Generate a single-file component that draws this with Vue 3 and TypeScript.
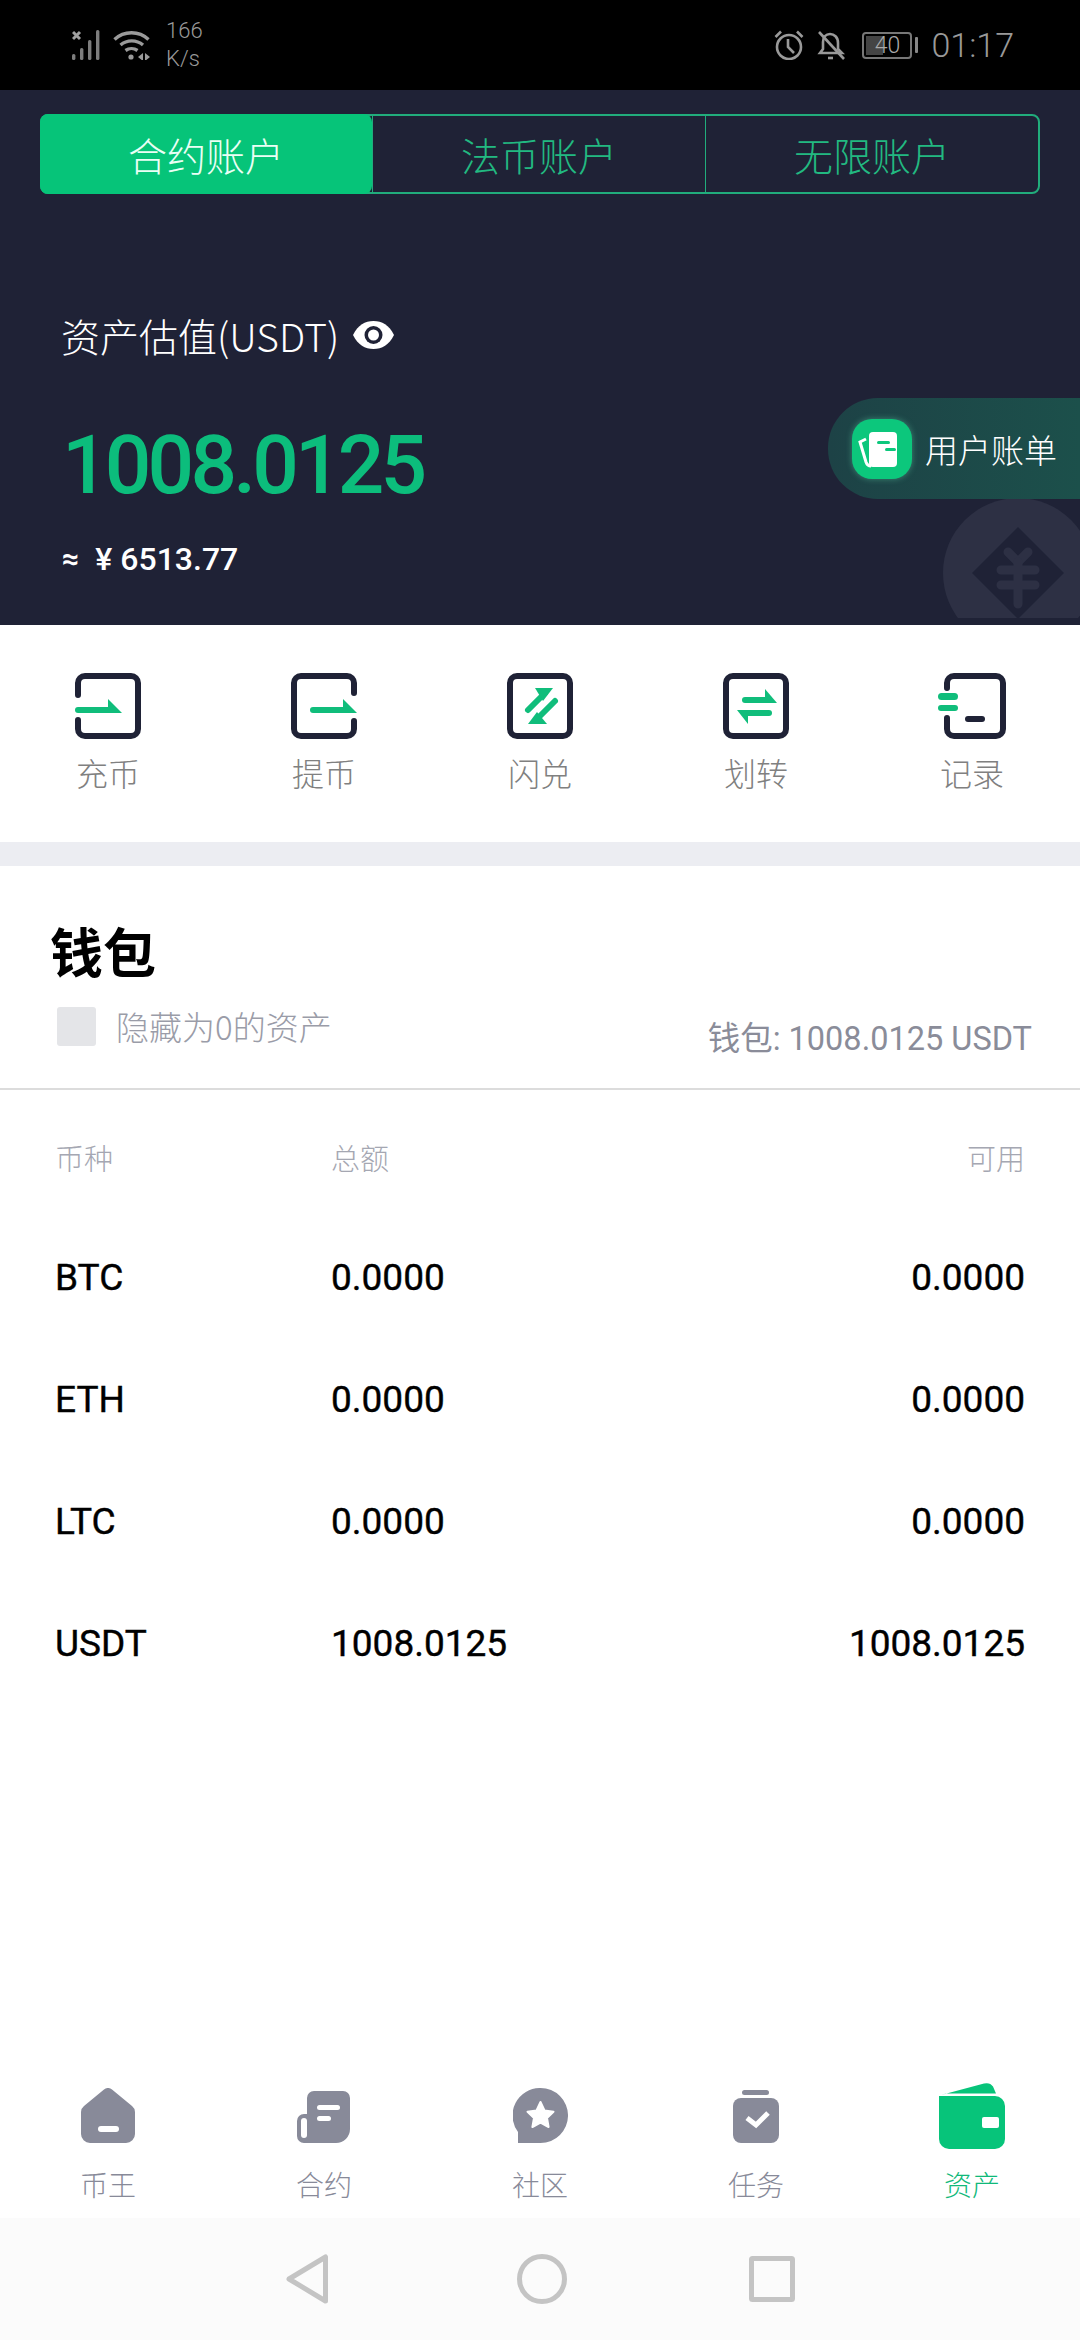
<script setup lang="ts">
const accounts = ['合约账户', '法币账户', '无限账户'];
const actions = ['充币', '提币', '闪兑', '划转', '记录'];
const coins = [
  { name: 'BTC', total: '0.0000', free: '0.0000' },
  { name: 'ETH', total: '0.0000', free: '0.0000' },
  { name: 'LTC', total: '0.0000', free: '0.0000' },
  { name: 'USDT', total: '1008.0125', free: '1008.0125' },
];
const tabs = ['币王', '合约', '社区', '任务', '资产'];
</script>

<template>
  <div class="page">
    <div class="status">
      <div class="status-left">
        <svg width="32" height="30" viewBox="0 0 32 30">
          <path d="M1 2l7 7M8 2l-7 7" stroke="#a0a0a0" stroke-width="3" />
          <g fill="#7d7d7d">
            <rect x="0" y="24" width="3.4" height="6" rx="1.5" />
            <rect x="8" y="18" width="3.4" height="12" rx="1.5" />
            <rect x="16" y="10" width="3.4" height="20" rx="1.5" />
            <rect x="24" y="0" width="3.4" height="30" rx="1.5" />
          </g>
        </svg>
        <svg width="38" height="30" viewBox="0 0 38 30" fill="none" stroke="#9a9a9a" stroke-width="3.4">
          <path d="M1.5 9.5C11 0.5 26 0.5 35.5 9.5" />
          <path d="M7.5 15C14 9.5 23.5 9.5 30 15" />
          <path d="M12.5 20.5C16 18 21 18 24.5 20.5" />
          <circle cx="18" cy="27" r="2.6" fill="#9a9a9a" stroke="none" />
          <path d="M30 23l-5 4 5 4zM32 23l5 4-5 4z" fill="#9a9a9a" stroke="none" />
        </svg>
        <div class="speed">
          <span>166</span>
          <span>K/s</span>
        </div>
      </div>
      <div class="status-right">
        <svg width="30" height="30" viewBox="0 0 30 30" fill="none" stroke="#999" stroke-width="2.6">
          <circle cx="15" cy="17" r="12" />
          <path d="M14 9v8l6 6" />
          <path d="M1.5 7L7 1.5M23 1.5L28.5 7" />
        </svg>
        <svg class="bell" width="28" height="30" viewBox="0 0 28 30" fill="none" stroke="#999" stroke-width="2.6">
          <path d="M3 23l3-4V12c0-5 3-8 7-8s8 3 8 9v6l4 4z" />
          <path d="M11 28h5" />
          <path d="M2 2l25 27" />
        </svg>
        <div class="battery">
          <div class="battery-level"></div>
          <span class="battery-text">40</span>
        </div>
        <div class="battery-nub"></div>
        <span class="clock">01:17</span>
      </div>
    </div>

    <div class="head">
      <div class="account-tabs">
        <div v-for="(a, i) in accounts" :key="a" class="account-tab" :class="{ active: i === 0 }">{{ a }}</div>
      </div>

      <div class="estimate">
        <span>资产估值(USDT)</span>
        <svg width="41" height="28" viewBox="0 0 41 28">
          <path d="M0 14C5 4 12 0 20.5 0S36 4 41 14C36 24 29 28 20.5 28S5 24 0 14z" fill="#fff" />
          <circle cx="20.5" cy="14" r="9" fill="#1f2236" />
          <circle cx="20.5" cy="14" r="5.5" fill="#fff" />
        </svg>
      </div>
      <div class="balance">1008.0125</div>
      <div class="cny"><span class="approx">≈</span><span>¥ 6513.77</span></div>

      <div class="bill-pill">
        <div class="bill-icon">
          <svg width="60" height="60" viewBox="0 0 60 60">
            <path d="M14 20l-6 3 6 20c1 3 3 4 5 4" fill="none" stroke="#fff" stroke-width="3" />
            <rect x="17" y="13" width="28" height="35" rx="4" fill="#fff" />
            <rect x="25" y="22" width="13" height="3" rx="1.5" fill="#0cc77c" />
            <rect x="33" y="29" width="11" height="3" rx="1.5" fill="#0cc77c" />
          </svg>
        </div>
        <span>用户账单</span>
      </div>

      <div class="mark">
        <svg width="150" height="150" viewBox="0 0 150 150">
          <circle cx="75" cy="75" r="75" fill="#2d3044" />
          <path d="M75 29l46 46-46 46-46-46z" fill="#1f2236" />
          <g stroke="#2d3044" stroke-width="9" stroke-linecap="round" fill="none">
            <path d="M65 54l10 10 10-10" />
            <path d="M58 72h34M58 87h34M75 64v42" />
          </g>
        </svg>
      </div>
    </div>

    <div class="actions">
      <div v-for="(a, i) in actions" :key="a" class="action">
        <svg v-if="i === 0" width="66" height="66" viewBox="0 0 66 66" fill="none">
          <path d="M3 22V10a7 7 0 0 1 7-7h46a7 7 0 0 1 7 7v46a7 7 0 0 1-7 7H10a7 7 0 0 1-7-7v-9" stroke="#1f2236" stroke-width="6" stroke-linecap="round" />
          <rect x="0" y="34" width="36" height="6" rx="3" fill="#10bd7b" />
          <path d="M33 26l14 14H33z" fill="#10bd7b" />
        </svg>
        <svg v-else-if="i === 1" width="66" height="66" viewBox="0 0 66 66" fill="none">
          <path d="M63 20V10a7 7 0 0 0-7-7H10a7 7 0 0 0-7 7v46a7 7 0 0 0 7 7h46a7 7 0 0 0 7-7v-8" stroke="#1f2236" stroke-width="6" stroke-linecap="round" />
          <rect x="19" y="34" width="36" height="6" rx="3" fill="#10bd7b" />
          <path d="M52 26l14 14H52z" fill="#10bd7b" />
        </svg>
        <svg v-else-if="i === 2" width="66" height="66" viewBox="0 0 66 66" fill="none">
          <rect x="3" y="3" width="60" height="60" rx="7" stroke="#1f2236" stroke-width="6" />
          <path d="M21 37l17-17" stroke="#10bd7b" stroke-width="6" stroke-linecap="round" />
          <path d="M28 15h18L36 28z" fill="#10bd7b" />
          <path d="M48 28L32 44" stroke="#10bd7b" stroke-width="6" stroke-linecap="round" />
          <path d="M21 51h19L30 39z" fill="#10bd7b" />
        </svg>
        <svg v-else-if="i === 3" width="66" height="66" viewBox="0 0 66 66" fill="none">
          <rect x="3" y="3" width="60" height="60" rx="7" stroke="#1f2236" stroke-width="6" />
          <rect x="19" y="24" width="28" height="6" rx="3" fill="#10bd7b" />
          <path d="M42 16l12 14H42z" fill="#10bd7b" />
          <rect x="20" y="37" width="29" height="6" rx="3" fill="#10bd7b" />
          <path d="M14 37h11v14z" fill="#10bd7b" />
        </svg>
        <svg v-else width="68" height="66" viewBox="0 0 68 66" fill="none">
          <path d="M9 15V10a7 7 0 0 1 7-7h42a7 7 0 0 1 7 7v46a7 7 0 0 1-7 7H16a7 7 0 0 1-7-7V45" stroke="#1f2236" stroke-width="6" stroke-linecap="round" />
          <rect x="0" y="20" width="20" height="7" rx="3.5" fill="#10bd7b" />
          <rect x="0" y="32" width="20" height="6" rx="3" fill="#10bd7b" />
          <rect x="27" y="43" width="20" height="6" rx="3" fill="#1f2236" />
        </svg>
        <span>{{ a }}</span>
      </div>
    </div>

    <div class="gap"></div>

    <div class="wallet">
      <h2>钱包</h2>
      <div class="wallet-meta">
        <label class="hide-zero">
          <span class="box"></span>
          <span class="hide-text">隐藏为0的资产</span>
        </label>
        <span class="wallet-total">钱包: 1008.0125 USDT</span>
      </div>
    </div>

    <div class="table">
      <div class="row row-head">
        <span class="c-name">币种</span>
        <span class="c-total">总额</span>
        <span class="c-free">可用</span>
      </div>
      <div v-for="c in coins" :key="c.name" class="row">
        <span class="c-name">{{ c.name }}</span>
        <span class="c-total">{{ c.total }}</span>
        <span class="c-free">{{ c.free }}</span>
      </div>
    </div>

    <div class="tabbar">
      <div v-for="(t, i) in tabs" :key="t" class="tab" :class="{ on: i === 4 }">
        <div class="tab-icon">
          <svg v-if="i === 0" width="54" height="55" viewBox="0 0 54 55">
            <path d="M23 1.5a6 6 0 0 1 8 0L51 18a8 8 0 0 1 3 6v22a9 9 0 0 1-9 9H9a9 9 0 0 1-9-9V24a8 8 0 0 1 3-6z" fill="#888a99" />
            <rect x="17" y="38" width="21" height="6" rx="3" fill="#fff" />
          </svg>
          <svg v-else-if="i === 1" width="54" height="52" viewBox="0 0 54 52">
            <path d="M17 0h29a7 7 0 0 1 7 7v31a14 14 0 0 1-14 14H7a7 7 0 0 1-7-7V30a7 7 0 0 1 7-7h3V7a7 7 0 0 1 7-7z" fill="#888a99" />
            <rect x="4" y="27" width="6" height="20" rx="3" fill="#fff" />
            <rect x="20" y="14" width="23" height="5" rx="2.5" fill="#fff" />
            <rect x="20" y="25" width="14" height="5" rx="2.5" fill="#fff" />
          </svg>
          <svg v-else-if="i === 2" width="55" height="55" viewBox="0 0 55 55">
            <path d="M27.500 0a27.500 27.500 0 1 1 0 55H5V44A27.500 27.500 0 0 1 27.500 0z" fill="#888a99" />
            <path d="M27.500 14l4 8.500 9 1.200-6.500 6.300 1.600 9-8.100-4.400-8.100 4.400 1.600-9-6.500-6.300 9-1.200z" fill="#fff" stroke="#fff" stroke-width="2" stroke-linejoin="round" />
          </svg>
          <svg v-else-if="i === 3" width="46" height="53" viewBox="0 0 46 53">
            <rect x="9" y="0" width="27" height="5" rx="2.5" fill="#888a99" />
            <rect x="0" y="8" width="46" height="45" rx="8" fill="#888a99" />
            <path d="M14 28l9 7 12-12" fill="none" stroke="#fff" stroke-width="5" />
          </svg>
          <svg v-else class="wallet-icon" width="66" height="66" viewBox="0 0 66 66">
            <path d="M2 12L45 .6q6-1.400 9 3l3 6.900H7z" fill="#07c47a" />
            <path d="M0 13h56a10 10 0 0 1 10 10v33a10 10 0 0 1-10 10H10A10 10 0 0 1 0 56z" fill="#07c47a" />
            <rect x="43" y="34" width="17" height="11" rx="2" fill="#fff" />
          </svg>
        </div>
        <span>{{ t }}</span>
      </div>
    </div>

    <div class="navbar">
      <svg width="44" height="50" viewBox="0 0 44 50" fill="none" stroke="#c4c4c4" stroke-width="5" stroke-linejoin="round">
        <path d="M39.500 3v44L3 25z" />
      </svg>
      <svg width="50" height="50" viewBox="0 0 50 50" fill="none" stroke="#c4c4c4" stroke-width="5">
        <circle cx="25" cy="25" r="22.500" />
      </svg>
      <svg width="46" height="46" viewBox="0 0 46 46" fill="none" stroke="#c4c4c4" stroke-width="5" stroke-linejoin="round">
        <rect x="2.500" y="2.500" width="41" height="41" rx="1" />
      </svg>
    </div>
  </div>
</template>

<style scoped>
.page {
  width: 1080px;
  height: 2340px;
  display: flex;
  flex-direction: column;
  overflow: hidden;
  background: #fff;
  font-family: 'Noto Sans CJK SC', 'Noto Sans', sans-serif;
  font-weight: 300;
}

.status {
  height: 90px;
  background: #000;
  color: #999;
  display: flex;
  justify-content: space-between;
  align-items: center;
  padding: 0 66px 0 72px;
  font-family: Roboto, sans-serif;
}
.status-left,
.status-right {
  display: flex;
  align-items: center;
}
.status-left svg + svg {
  margin-left: 9px;
}
.speed {
  display: flex;
  flex-direction: column;
  margin-left: 15px;
  font-size: 22px;
  line-height: 28px;
  font-weight: 300;
}
.bell {
  margin-left: 13px;
}
.battery {
  position: relative;
  width: 50px;
  height: 27px;
  margin-left: 17px;
  border: 2px solid #777;
  border-radius: 4px;
  box-sizing: border-box;
  padding: 2px;
}
.battery-level {
  width: 40%;
  height: 100%;
  background: #444;
}
.battery-text {
  position: absolute;
  left: 0;
  right: 0;
  top: 0;
  text-align: center;
  font-size: 23px;
  line-height: 23px;
  color: #aaa;
}
.battery-nub {
  width: 3px;
  height: 16px;
  margin-left: 3px;
  background: #888;
  border-radius: 1px;
}
.clock {
  margin-left: 13px;
  font-size: 34px;
}

.head {
  position: relative;
  height: 535px;
  background: #1f2236;
  padding: 24px 40px 0;
  box-sizing: border-box;
  color: #fff;
}
.account-tabs {
  display: flex;
  height: 80px;
  border: 2px solid #21ad7c;
  border-radius: 8px;
  box-sizing: border-box;
}
.account-tab {
  flex: 1;
  display: flex;
  align-items: center;
  justify-content: center;
  font-size: 39px;
  color: #22b981;
  border-left: 1px solid #21ad7c;
}
.account-tab.active {
  background: #06c479;
  color: #eafff5;
  margin: -2px 0 -2px -2px;
  border-left: none;
  border-radius: 8px;
}
.estimate {
  display: flex;
  align-items: center;
  gap: 14px;
  margin: 118px 0 0 21px;
  height: 46px;
  font-size: 39px;
  line-height: 46px;
}
.balance {
  margin: 52px 0 0 22px;
  height: 110px;
  line-height: 110px;
  font-family: Roboto, sans-serif;
  font-size: 82px;
  font-weight: 500;
  letter-spacing: -3.8px;
  color: #0cbd7c;
}
.cny {
  display: flex;
  gap: 16px;
  margin: 19px 0 0 22px;
  font-family: Roboto, sans-serif;
  font-size: 32px;
  font-weight: 500;
  line-height: 40px;
}
.approx {
  font-size: 30px;
  font-weight: 700;
}
.bill-pill {
  position: absolute;
  right: 0;
  top: 308px;
  width: 252px;
  height: 101px;
  display: flex;
  align-items: center;
  box-sizing: border-box;
  padding-left: 24px;
  border-radius: 50px 0 0 50px;
  background: linear-gradient(90deg, #1d4246, #1c504b);
  font-size: 33px;
  z-index: 1;
}
.bill-icon {
  width: 60px;
  height: 60px;
  margin-right: 13px;
  border-radius: 20px;
  background: #0cc77c;
  box-shadow: 0 0 6px rgba(120, 255, 200, 0.35);
}
.bill-icon svg {
  display: block;
}
.mark {
  position: absolute;
  right: 0;
  top: 408px;
  width: 137px;
  height: 120px;
  overflow: hidden;
}
.mark svg {
  display: block;
}

.actions {
  height: 217px;
  display: flex;
  padding-top: 48px;
  box-sizing: border-box;
}
.action {
  flex: 0 0 216px;
  display: flex;
  flex-direction: column;
  align-items: center;
  font-size: 32px;
  color: #808080;
}
.action svg {
  overflow: visible;
}
.action span {
  line-height: 44px;
  margin-top: 11px;
}
.gap {
  height: 24px;
  background: #ecedf2;
}

.wallet {
  height: 174px;
  border-bottom: 2px solid #dcdcdc;
  padding: 48px 48px 0 57px;
}
.wallet h2 {
  margin: 0 0 0 -7px;
  font-size: 53px;
  line-height: 72px;
  font-weight: 700;
  color: #000;
}
.wallet-meta {
  display: flex;
  justify-content: space-between;
  margin-top: 21px;
}
.hide-zero {
  display: flex;
  align-items: flex-start;
  gap: 20px;
  font-size: 33px;
  line-height: 44px;
  color: #9a9ca8;
}
.hide-text {
  margin-top: -3px;
}
.box {
  width: 39px;
  height: 39px;
  border-radius: 3px;
  background: #e4e5e8;
}
.wallet-total {
  margin-top: 10px;
  font-family: Roboto, 'Noto Sans CJK SC', sans-serif;
  font-size: 32.5px;
  line-height: 44px;
  font-weight: 400;
  color: #8a8c99;
}

.table {
  margin-top: 7px;
  padding: 0 55px;
}
.row {
  display: flex;
  align-items: center;
  height: 122px;
  font-family: Roboto, 'Noto Sans CJK SC', sans-serif;
  font-size: 37px;
  font-weight: 400;
  color: #000;
  -webkit-text-stroke: 0.4px #000;
}
.row-head {
  height: 119px;
  font-family: 'Noto Sans CJK SC', sans-serif;
  font-size: 29px;
  font-weight: 300;
  color: #a5a7b2;
  -webkit-text-stroke: 0;
}
.c-name {
  width: 276px;
}
.c-total {
  flex: 1;
}

.tabbar {
  margin-top: auto;
  height: 148px;
  display: flex;
}
.tab {
  flex: 0 0 216px;
  display: flex;
  flex-direction: column;
  align-items: center;
  font-size: 28px;
  color: #888a99;
}
.tab.on {
  color: #10b97a;
}
.tab-icon {
  height: 73px;
  display: flex;
  align-items: flex-end;
}
.wallet-icon {
  margin-bottom: -6px;
}
.tab span {
  margin-top: 22px;
  line-height: 38px;
}
.navbar {
  height: 122px;
  background: #fbfbfb;
  display: flex;
  align-items: center;
  justify-content: center;
}
.navbar svg:nth-child(1) {
  margin-right: 187px;
}
.navbar svg:nth-child(3) {
  margin-left: 182px;
}
</style>

<style>
html,
body {
  margin: 0;
  background: #fff;
}
</style>
